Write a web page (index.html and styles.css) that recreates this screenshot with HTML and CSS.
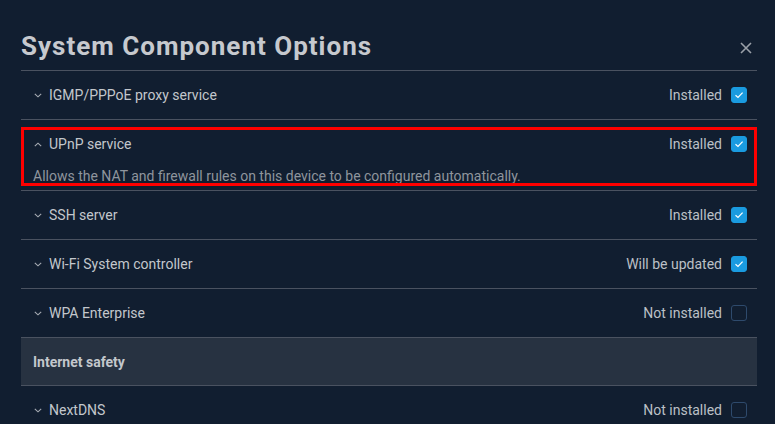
FILE: index.html
```html
<!DOCTYPE html>
<html>
<head>
<meta charset="utf-8">
<link rel="stylesheet" href="styles.css">
</head>
<body>
<div class="dialog">
  <div class="header">
    <h1 class="title">System Component Options</h1>
    <button class="close" aria-label="Close">
      <svg width="12" height="12" viewBox="0 0 12 12"><path d="M1 1L11 11M11 1L1 11" stroke="#9aa0a8" stroke-width="1.6" fill="none"/></svg>
    </button>
  </div>

  <div class="row">
    <div class="row-head">
      <svg class="chev" width="8" height="5" viewBox="0 0 8 5"><path d="M0.8 0.8L4 3.8L7.2 0.8" stroke="#a8adb4" stroke-width="1.1" fill="none"/></svg>
      <span class="label">IGMP/PPPoE proxy service</span>
      <span class="status">Installed</span>
      <span class="cb checked"><svg width="10" height="8" viewBox="0 0 10 8"><path d="M1.5 4.2L4 6.4L8.6 1.6" stroke="#fff" stroke-width="1.2" fill="none"/></svg></span>
    </div>
  </div>

  <div class="row expanded">
    <div class="row-head">
      <svg class="chev" width="8" height="5" viewBox="0 0 8 5"><path d="M0.8 4.2L4 1.2L7.2 4.2" stroke="#a8adb4" stroke-width="1.1" fill="none"/></svg>
      <span class="label">UPnP service</span>
      <span class="status">Installed</span>
      <span class="cb checked"><svg width="10" height="8" viewBox="0 0 10 8"><path d="M1.5 4.2L4 6.4L8.6 1.6" stroke="#fff" stroke-width="1.2" fill="none"/></svg></span>
    </div>
    <p class="desc">Allows the NAT and firewall rules on this device to be configured automatically.</p>
  </div>

  <div class="row">
    <div class="row-head">
      <svg class="chev" width="8" height="5" viewBox="0 0 8 5"><path d="M0.8 0.8L4 3.8L7.2 0.8" stroke="#a8adb4" stroke-width="1.1" fill="none"/></svg>
      <span class="label">SSH server</span>
      <span class="status">Installed</span>
      <span class="cb checked"><svg width="10" height="8" viewBox="0 0 10 8"><path d="M1.5 4.2L4 6.4L8.6 1.6" stroke="#fff" stroke-width="1.2" fill="none"/></svg></span>
    </div>
  </div>

  <div class="row">
    <div class="row-head">
      <svg class="chev" width="8" height="5" viewBox="0 0 8 5"><path d="M0.8 0.8L4 3.8L7.2 0.8" stroke="#a8adb4" stroke-width="1.1" fill="none"/></svg>
      <span class="label">Wi-Fi System controller</span>
      <span class="status">Will be updated</span>
      <span class="cb checked"><svg width="10" height="8" viewBox="0 0 10 8"><path d="M1.5 4.2L4 6.4L8.6 1.6" stroke="#fff" stroke-width="1.2" fill="none"/></svg></span>
    </div>
  </div>

  <div class="row">
    <div class="row-head">
      <svg class="chev" width="8" height="5" viewBox="0 0 8 5"><path d="M0.8 0.8L4 3.8L7.2 0.8" stroke="#a8adb4" stroke-width="1.1" fill="none"/></svg>
      <span class="label">WPA Enterprise</span>
      <span class="status">Not installed</span>
      <span class="cb"></span>
    </div>
  </div>

  <div class="section">Internet safety</div>

  <div class="row">
    <div class="row-head">
      <svg class="chev" width="8" height="5" viewBox="0 0 8 5"><path d="M0.8 0.8L4 3.8L7.2 0.8" stroke="#a8adb4" stroke-width="1.1" fill="none"/></svg>
      <span class="label">NextDNS</span>
      <span class="status">Not installed</span>
      <span class="cb"></span>
    </div>
  </div>
</div>
</body>
</html>
```

FILE: styles.css
```css
html, body {
  margin: 0;
  padding: 0;
  background: #111e30;
  font-family: Roboto, "Liberation Sans", Arial, sans-serif;
  overflow: hidden;
}

.dialog {
  padding: 0 18px 0 21px;
}

.header {
  display: flex;
  align-items: flex-start;
  justify-content: space-between;
  height: 70px;
  border-bottom: 1px solid #4a5260;
}

.title {
  margin: 31px 0 0 0;
  font-size: 26px;
  line-height: 30px;
  letter-spacing: 1px;
  font-weight: 700;
  color: #c6c9ce;
}

.close {
  margin: 42px 5px 0 0;
  padding: 0;
  border: 0;
  background: none;
  width: 12px;
  height: 12px;
  display: flex;
}

.row {
  border-bottom: 1px solid #4a5260;
}

.row-head {
  display: flex;
  align-items: center;
  height: 47px;
  padding: 0 10px 1px 12px;
}

.chev {
  flex: none;
  margin: 1px 7px 0 1px;
}

.label {
  flex: 1;
  font-size: 14px;
  color: #c3c7cc;
}

.status {
  font-size: 14px;
  color: #bcc0c6;
  margin-right: 9px;
}

.cb {
  flex: none;
  width: 16px;
  height: 16px;
  box-sizing: border-box;
  border-radius: 3px;
  border: 1px solid #2e4a6c;
  display: flex;
  align-items: center;
  justify-content: center;
}

.cb.checked {
  background: #1a9be0;
  border-color: #1a9be0;
}

.expanded {
  position: relative;
  height: 70px;
}

.expanded::after {
  content: "";
  position: absolute;
  left: 0;
  right: 0;
  top: 7px;
  bottom: 4px;
  border: 3px solid #ff0000;
  pointer-events: none;
}

.desc {
  margin: 0;
  padding: 0 12px;
  font-size: 14px;
  line-height: 16px;
  color: #8f959d;
}

.section {
  height: 47px;
  display: flex;
  align-items: center;
  padding-left: 12px;
  background: #273241;
  border-bottom: 1px solid #4a5260;
  font-size: 14px;
  font-weight: 700;
  color: #c3c7cc;
}
```
